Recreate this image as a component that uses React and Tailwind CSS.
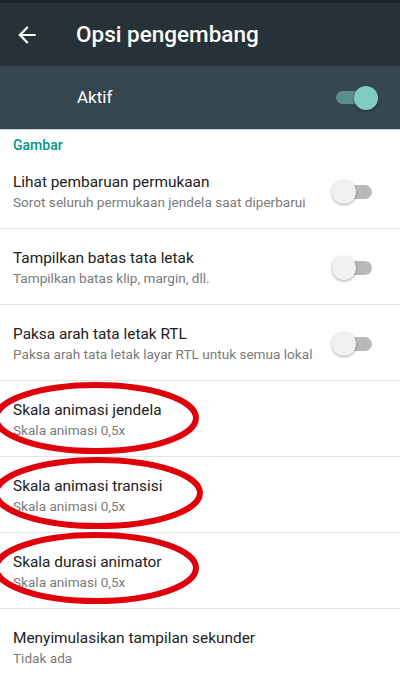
import React from "react";

function Toggle({ on }) {
  if (on) {
    return (
      <div className="relative w-[40px] h-[24px] flex items-center">
        <div className="ml-[2px] w-[34px] h-[13px] rounded-full bg-[#5b8f8b]" />
        <div className="absolute right-[-4px] top-[0px] w-[24px] h-[24px] rounded-full bg-[#80cbc4] shadow-[0_1px_3px_rgba(0,0,0,0.45)]" />
      </div>
    );
  }
  return (
    <div className="relative w-[40px] h-[24px] flex items-center">
      <div className="ml-[4px] w-[34px] h-[14px] rounded-full bg-[#b9b9b9]" />
      <div className="absolute left-[-2px] top-[0px] w-[24px] h-[24px] rounded-full bg-[#f1f1f1] shadow-[0_1px_3px_rgba(0,0,0,0.35)]" />
    </div>
  );
}

function Row({ title, sub, toggle, last }) {
  return (
    <div className={"flex items-start pl-[13px] pr-[26px] pt-[19px] h-[76px] " + (last ? "" : "border-b border-[#e3e3e3]")}>
      <div className="flex-1 flex flex-col">
        <div className="text-[15.4px] leading-[20px] text-[#212121]">{title}</div>
        <div className="text-[13.6px] leading-[20px] text-[#7a7a7a]">{sub}</div>
      </div>
      {toggle && (
        <div className="mt-[8px]">
          <Toggle on={false} />
        </div>
      )}
    </div>
  );
}

export default function App() {
  const rows = [
    { title: "Lihat pembaruan permukaan", sub: "Sorot seluruh permukaan jendela saat diperbarui", toggle: true },
    { title: "Tampilkan batas tata letak", sub: "Tampilkan batas klip, margin, dll.", toggle: true },
    { title: "Paksa arah tata letak RTL", sub: "Paksa arah tata letak layar RTL untuk semua lokal", toggle: true },
    { title: "Skala animasi jendela", sub: "Skala animasi 0,5x" },
    { title: "Skala animasi transisi", sub: "Skala animasi 0,5x" },
    { title: "Skala durasi animator", sub: "Skala animasi 0,5x" },
    { title: "Menyimulasikan tampilan sekunder", sub: "Tidak ada", last: true },
  ];
  return (
    <div className="relative w-[400px] h-[700px] overflow-hidden bg-white" style={{ fontFamily: "Roboto, 'Noto Sans', sans-serif" }}>
      <div className="h-[3px] bg-[#1d2529]" />
      <div className="h-[63px] bg-[#263238] flex items-center">
        <svg width="26" height="26" viewBox="0 0 24 24" className="ml-[14px] mr-[36px]" fill="#ffffff">
          <path d="M20 11H7.83l5.59-5.59L12 4l-8 8 8 8 1.41-1.41L7.83 13H20v-2z" />
        </svg>
        <div className="text-[22.5px] font-medium text-white leading-none">Opsi pengembang</div>
      </div>
      <div className="h-[64px] bg-[#37474f] flex items-center pl-[77px] pr-[26px] border-b border-[#c9d0d3]">
        <div className="flex-1 text-[17px] text-white">Aktif</div>
        <Toggle on={true} />
      </div>
      <div className="h-[23px] pl-[13px] pt-[5px] text-[14px] leading-[20px] font-medium text-[#009688]">Gambar</div>
      {rows.map((r, i) => (
        <Row key={i} {...r} />
      ))}
      <svg className="absolute left-0 top-0 pointer-events-none" width="400" height="700" viewBox="0 0 400 700">
        <ellipse cx="96" cy="418" rx="100" ry="33" fill="none" stroke="#e0000b" strokeWidth="6" />
        <ellipse cx="98" cy="493" rx="102" ry="33" fill="none" stroke="#e0000b" strokeWidth="6" />
        <ellipse cx="96" cy="568" rx="100" ry="33" fill="none" stroke="#e0000b" strokeWidth="6" />
      </svg>
    </div>
  );
}
